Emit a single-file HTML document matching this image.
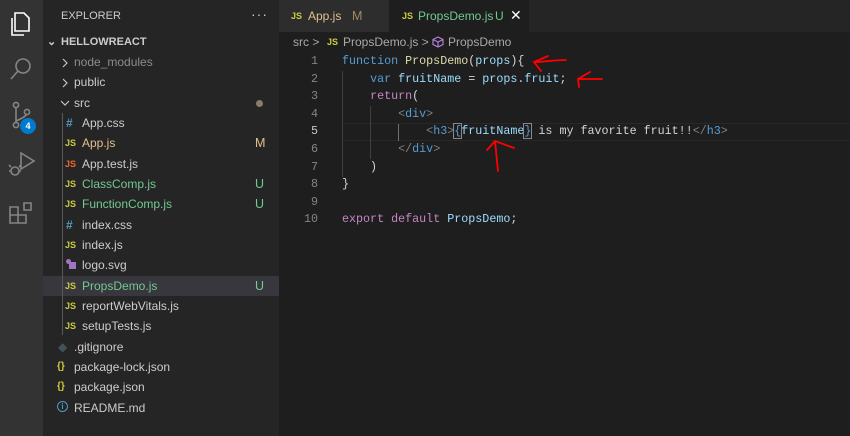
<!DOCTYPE html>
<html><head><meta charset="utf-8"><style>
*{margin:0;padding:0;box-sizing:border-box}
body{width:850px;height:436px;overflow:hidden;background:#1e1e1e;font-family:"Liberation Sans",sans-serif;position:relative}
.ab{position:absolute;left:0;top:0;width:43px;height:436px;background:#333333}
.sb{position:absolute;left:43px;top:0;width:236px;height:436px;background:#252526}
.t{position:absolute;font-size:12px;color:#cccccc;white-space:nowrap;line-height:20px}
.js{position:absolute;font-size:9px;font-weight:bold;color:#cbcb41;line-height:20px}
.st{position:absolute;left:255px;font-size:12.5px;line-height:20px}
.tabs{position:absolute;left:279px;top:0;width:571px;height:32px;background:#252526}
.code{position:absolute;font-family:"Liberation Mono",monospace;font-size:11.7px;line-height:17.6px;white-space:pre;color:#d4d4d4}
.ln{position:absolute;left:290px;width:28px;text-align:right;font-family:"Liberation Mono",monospace;font-size:11.7px;line-height:17.6px;color:#858585}
.k{color:#569cd6}.p{color:#c586c0}.f{color:#dcdcaa}.v{color:#9cdcfe}.g{color:#808080}
</style></head><body>
<div class="ab">
<svg width="43" height="240" viewBox="0 0 43 240" fill="none" stroke="#858585" stroke-width="1.6">
<g stroke="#ffffff"><path d="M15 13h9l5 5v13H15z"/><path d="M12 18v17h12"/></g>
<circle cx="23" cy="66" r="7"/><path d="M18 71l-7 8"/>
<circle cx="16" cy="105" r="2.6"/><circle cx="16" cy="125" r="2.6"/><circle cx="27" cy="112" r="2.6"/><path d="M16 108v14M16 121c5-2 9-4 11-7"/>
<path d="M21 153v16l13-8z"/><circle cx="15" cy="171" r="4"/><path d="M11 167l-2-2M19 167l2-2M9 171h2M19 171h2"/>
<path d="M10 207h8v8h-8zM10 215h8v8h-8zM18 215h8v8h-8zM24 203h7v7h-7z"/>
</svg>
<div style="position:absolute;left:20px;top:118px;width:16px;height:16px;border-radius:8px;background:#007acc;color:#fff;font-size:9px;font-weight:bold;text-align:center;line-height:16px">4</div>
</div>
<div class="sb">
<div class="t" style="left:18px;top:6px;font-size:11px">EXPLORER</div>
<div class="t" style="left:208px;top:4px;font-size:14px;letter-spacing:1px">···</div>
<div class="t" style="left:4px;top:32px;font-size:11px;font-weight:bold">⌄</div>
<div class="t" style="left:18px;top:32px;font-size:11px;font-weight:bold">HELLOWREACT</div>
</div>
<div style="position:absolute;left:43px;top:276px;width:236px;height:20px;background:#37373d"></div>
<div style="position:absolute;left:62px;top:113px;width:1px;height:222px;background:#585858"></div>
<svg style="position:absolute;left:43px;top:0" width="40" height="120" fill="none" stroke="#c5c5c5" stroke-width="1.2">
<path d="M20 59l4 4-4 4M20 79l4 4-4 4M18 101l4 4 4-4"/></svg>
<div class="t" style="left:74px;top:52px;color:#8c8c8c">node_modules</div>
<div class="t" style="left:74px;top:72px">public</div>
<div class="t" style="left:74px;top:93px">src</div>
<div style="position:absolute;left:256px;top:100px;width:7px;height:7px;border-radius:4px;background:#8b7c6a"></div>

<div class="t" style="left:66px;top:113px;color:#519aba;font-weight:bold;font-size:12px">#</div><div class="t" style="left:82px;top:113px">App.css</div>
<div class="js" style="left:65px;top:133px">JS</div><div class="t" style="left:82px;top:133px;color:#e2c08d">App.js</div><div class="st" style="top:133px;color:#e2c08d">M</div>
<div class="js" style="left:65px;top:154px;color:#f1662a">JS</div><div class="t" style="left:82px;top:154px">App.test.js</div>
<div class="js" style="left:65px;top:174px">JS</div><div class="t" style="left:82px;top:174px;color:#73c991">ClassComp.js</div><div class="st" style="top:174px;color:#73c991">U</div>
<div class="js" style="left:65px;top:194px">JS</div><div class="t" style="left:82px;top:194px;color:#73c991">FunctionComp.js</div><div class="st" style="top:194px;color:#73c991">U</div>
<div class="t" style="left:66px;top:215px;color:#519aba;font-weight:bold;font-size:12px">#</div><div class="t" style="left:82px;top:215px">index.css</div>
<div class="js" style="left:65px;top:235px">JS</div><div class="t" style="left:82px;top:235px">index.js</div>
<div style="position:absolute;left:66px;top:259px;width:5px;height:5px;border-radius:3px;background:#a074c4"></div><div style="position:absolute;left:69px;top:262px;width:7px;height:7px;background:#a074c4"></div><div class="t" style="left:82px;top:255px">logo.svg</div>
<div class="js" style="left:65px;top:276px">JS</div><div class="t" style="left:82px;top:276px;color:#73c991">PropsDemo.js</div><div class="st" style="top:276px;color:#73c991">U</div>
<div class="js" style="left:65px;top:296px">JS</div><div class="t" style="left:82px;top:296px">reportWebVitals.js</div>
<div class="js" style="left:65px;top:316px">JS</div><div class="t" style="left:82px;top:316px">setupTests.js</div>
<div class="t" style="left:58px;top:337px;color:#41535b;font-size:12px">◆</div><div class="t" style="left:74px;top:337px">.gitignore</div>
<div class="t" style="left:57px;top:357px;color:#cbcb41;font-size:10px;font-weight:bold">{}</div><div class="t" style="left:74px;top:357px">package-lock.json</div>
<div class="t" style="left:57px;top:377px;color:#cbcb41;font-size:10px;font-weight:bold">{}</div><div class="t" style="left:74px;top:377px">package.json</div>
<div style="position:absolute;left:57px;top:401px;width:11px;height:11px;border:1.3px solid #519aba;border-radius:6px;color:#519aba;font-size:8px;font-weight:bold;text-align:center;line-height:9px">i</div><div class="t" style="left:74px;top:398px">README.md</div>

<div class="tabs">
<div style="position:absolute;left:0;top:0;width:110px;height:32px;background:#2d2d2d"></div>
<div class="js" style="left:12px;top:6px">JS</div><div class="t" style="left:29px;top:6px;color:#e2c08d">App.js</div><div class="t" style="left:73px;top:6px;color:#a08a68;font-size:12.5px">M</div>
<div style="position:absolute;left:110px;top:0;width:140px;height:32px;background:#1e1e1e"></div>
<div class="js" style="left:123px;top:6px">JS</div><div class="t" style="left:139px;top:6px;color:#73c991">PropsDemo.js</div><div class="t" style="left:216px;top:6px;color:#73c991;font-size:12px">U</div>
<div class="t" style="left:231px;top:5px;color:#ffffff;font-size:14px">✕</div>
</div>
<div class="t" style="left:293px;top:32px;color:#a9a9a9">src &gt;</div>
<div class="js" style="left:327px;top:32px">JS</div>
<div class="t" style="left:343px;top:32px;color:#a9a9a9">PropsDemo.js &gt;</div>
<svg style="position:absolute;left:432px;top:36px" width="12" height="12" fill="none" stroke="#b180d7" stroke-width="1.2"><path d="M6 1l5 2.5v5L6 11 1 8.5v-5zM1 3.5L6 6l5-2.5M6 6v5"/></svg>
<div class="t" style="left:448px;top:32px;color:#a9a9a9">PropsDemo</div>

<div style="position:absolute;left:342px;top:123px;width:508px;height:18px;border-top:1px solid #282828;border-bottom:1px solid #282828"></div>
<div style="position:absolute;left:342px;top:71px;width:1px;height:106px;background:#404040"></div>
<div style="position:absolute;left:370px;top:106px;width:1px;height:53px;background:#404040"></div>
<div style="position:absolute;left:398px;top:124px;width:1px;height:17px;background:#707070"></div>
<div class="ln" style="top:53px">1<br>2<br>3<br>4<br><span style="color:#c6c6c6">5</span><br>6<br>7<br>8<br>9<br>10</div>
<div class="code" style="left:342px;top:53px"><span class="k">function</span> <span class="f">PropsDemo</span>(<span class="v">props</span>){
    <span class="k">var</span> <span class="v">fruitName</span> = <span class="v">props</span>.<span class="v">fruit</span>;
    <span class="p">return</span>(
        <span class="g">&lt;</span><span class="k">div</span><span class="g">&gt;</span>
            <span class="g">&lt;</span><span class="k">h3</span><span class="g">&gt;</span><span class="k" style="outline:1px solid #888">{</span><span class="v">fruitName</span><span class="k" style="outline:1px solid #888">}</span> is my favorite fruit!!<span class="g">&lt;/</span><span class="k">h3</span><span class="g">&gt;</span>
        <span class="g">&lt;/</span><span class="k">div</span><span class="g">&gt;</span>
    )
}

<span class="p">export</span> <span class="p">default</span> <span class="v">PropsDemo</span>;</div>
<svg style="position:absolute;left:0;top:0" width="850" height="436" fill="none" stroke="#ff0000" stroke-width="1.8" stroke-linecap="round">
<path d="M548 56l-14 6 7 9M534 62c10 0 20-2 32-2"/>
<path d="M590 72l-12 7 1 8M578 79c8 0 16 0 24 0"/>
<path d="M487 150l8-9 19 7M495 141c1 10 2 20 3 30"/>
</svg>
</body></html>
